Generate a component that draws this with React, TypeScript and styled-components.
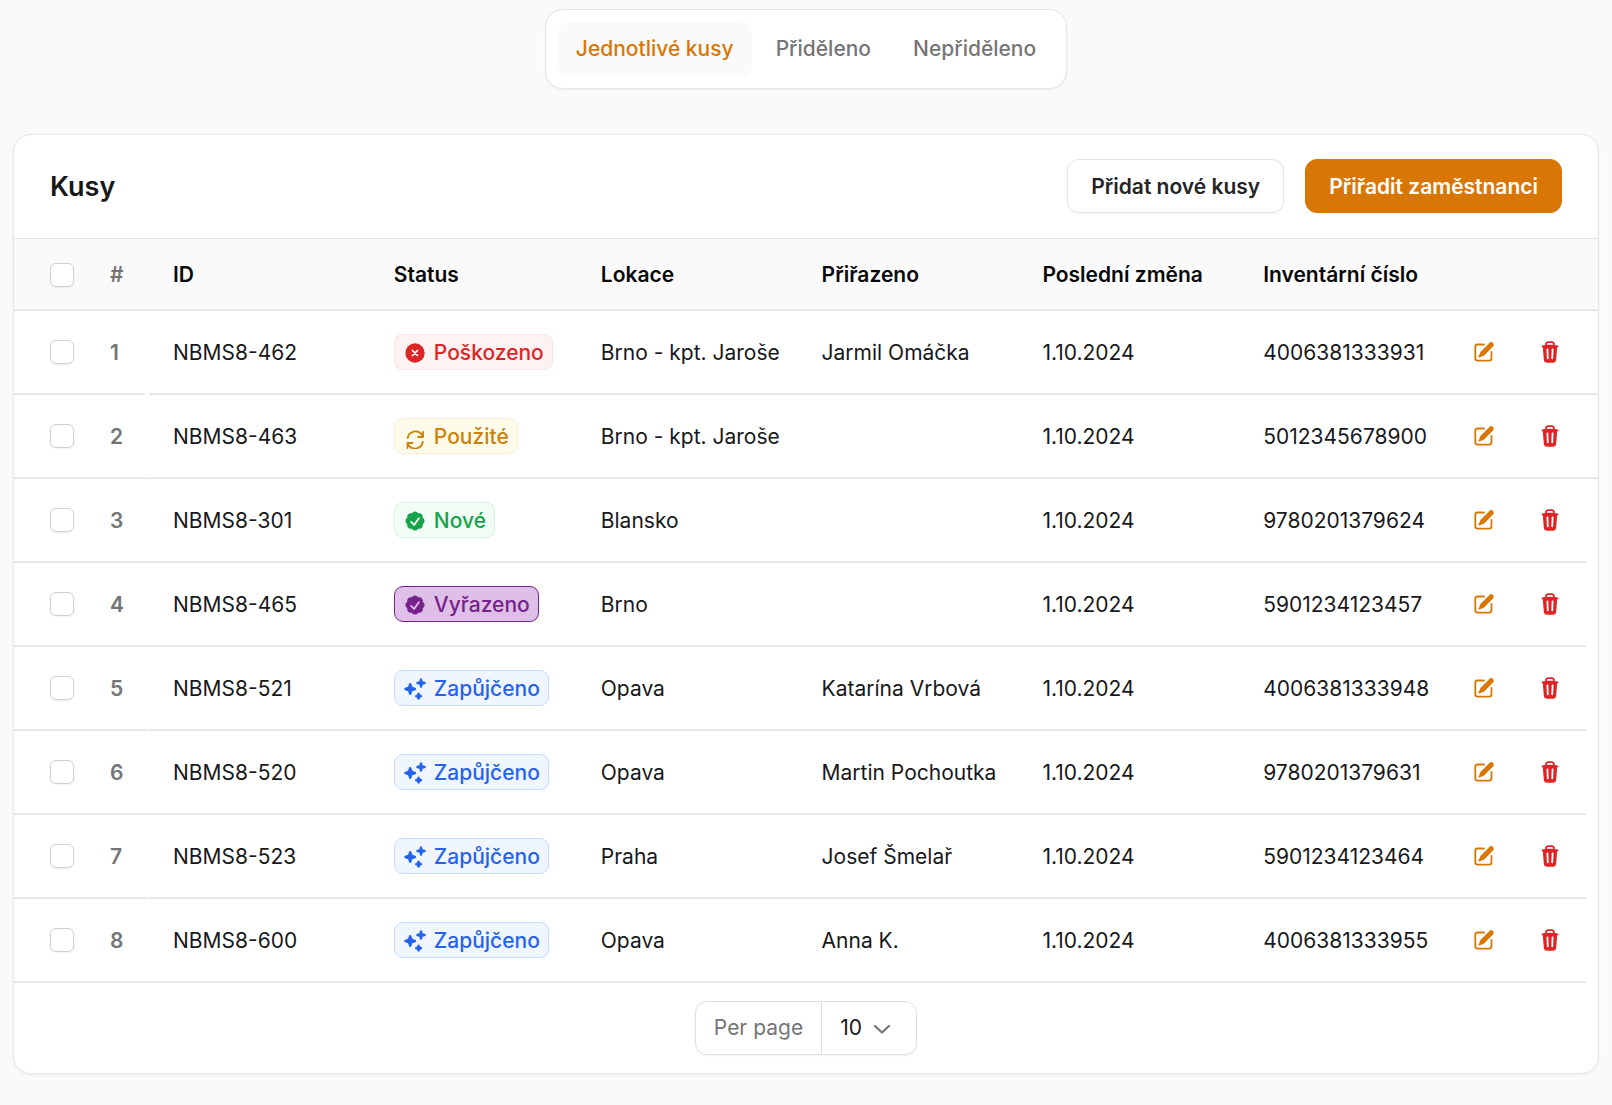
import React, { useState } from "react";
import styled, { createGlobalStyle, css } from "styled-components";
import { HiMiniCheckBadge, HiMiniPencilSquare, HiMiniSparkles, HiMiniTrash } from "react-icons/hi2";

const GlobalStyle = createGlobalStyle`
  *, *::before, *::after { box-sizing: border-box; }
  body {
    margin: 0;
    background: #fafafa;
    color: #18181b;
    font-family: Inter, "Liberation Sans", sans-serif;
    font-size: 21px;
    line-height: 30px;
  }
  button, input, select { font: inherit; color: inherit; }
`;

const ring = css`
  border: 1px solid #e6e6e6;
  box-shadow: 0 1px 3px rgba(0, 0, 0, 0.06);
`;

const Page = styled.main`
  display: flex;
  flex-direction: column;
  gap: 45px;
  padding: 9px 13px 31px;
`;

const Tabs = styled.nav`
  ${ring}
  align-self: center;
  display: flex;
  gap: 6px;
  padding: 12px;
  border-radius: 18px;
  background: #fff;
`;

const Tab = styled.button<{ $active: boolean }>`
  border: 0;
  border-radius: 12px;
  padding: 12px 18px;
  background: ${(p) => (p.$active ? "#fafafa" : "transparent")};
  color: ${(p) => (p.$active ? "#d97706" : "#757575")};
  font-weight: 500;
  cursor: pointer;
`;

const Card = styled.section`
  ${ring}
  border-radius: 18px;
  background: #fff;
  overflow: hidden;
`;

const CardHeader = styled.header`
  display: flex;
  align-items: center;
  justify-content: space-between;
  padding: 24px 36px 25px;
  border-bottom: 1px solid #e2e2e2;
`;

const Title = styled.h1`
  margin: 0;
  padding-top: 2px;
  font-size: 27px;
  line-height: 36px;
  font-weight: 600;
`;

const Actions = styled.div`
  display: flex;
  gap: 21px;
`;

const Button = styled.button<{ $primary?: boolean }>`
  padding: 12px 23px 10px;
  border: 1px solid ${(p) => (p.$primary ? "#d97706" : "#e4e4e4")};
  border-radius: 12px;
  background: ${(p) => (p.$primary ? "#d97706" : "#fff")};
  color: ${(p) => (p.$primary ? "#fff" : "#242427")};
  box-shadow: 0 1px 2px rgba(0, 0, 0, 0.06);
  font-weight: 600;
  cursor: pointer;
`;

const Table = styled.table`
  width: 100%;
  table-layout: fixed;
  border-collapse: separate;
  border-spacing: 0;
`;

const Col = styled.col<{ $width?: number }>`
  ${(p) => p.$width && `width: ${p.$width}px;`}
`;

/* Row separator along the bottom of a cell, stopping $gap pixels before its right edge. */
const rule = css<{ $gap?: number }>`
  background-image: linear-gradient(#efefef 50%, #e0e0e0 50%);
  background-repeat: no-repeat;
  background-position: left bottom;
  background-size: calc(100% - ${(p) => p.$gap ?? 0}px) 2px;
`;

const HeadCell = styled.th<{ $muted?: boolean; $gap?: number }>`
  height: 72px;
  padding: 0 0 0 ${(p) => (p.$muted ? 12 : 24)}px;
  background-color: #fafafa;
  ${rule}
  color: ${(p) => (p.$muted ? "#757575" : "#09090b")};
  font-weight: 600;
  text-align: left;
  white-space: nowrap;
`;

const Cell = styled.td<{ $muted?: boolean; $gap?: number }>`
  height: 84px;
  padding: 0 0 0 ${(p) => (p.$muted ? 12 : 24)}px;
  ${rule}
  color: ${(p) => (p.$muted ? "#757575" : "#18181b")};
  font-weight: ${(p) => (p.$muted ? 600 : 400)};
  white-space: nowrap;
`;

const CheckHeadCell = styled(HeadCell)`
  padding-left: 36px;
`;

const CheckCell = styled(Cell)`
  padding: 0 0 2px 36px;
`;

const StatusCell = styled(Cell)`
  padding-bottom: 2px;
`;

const IconCell = styled(Cell)`
  padding: 0 0 2px 12px;
`;

const Checkbox = styled.input`
  appearance: none;
  display: block;
  width: 24px;
  height: 24px;
  margin: 0;
  border: 1px solid #d0d0d0;
  border-radius: 6px;
  background: #fff;
  box-shadow: 0 1px 2px rgba(0, 0, 0, 0.06);
  &:checked { background: #d97706; border-color: #d97706; }
`;

type Tone = "danger" | "warning" | "success" | "retired" | "info";

const tones: Record<Tone, { fg: string; bg: string; line: string }> = {
  danger: { fg: "#dc2626", bg: "#fef2f2", line: "#fde2e2" },
  warning: { fg: "#ca8209", bg: "#fffbeb", line: "#fdeed3" },
  success: { fg: "#16a34a", bg: "#f1fdf5", line: "#d6f3e0" },
  retired: { fg: "#77218b", bg: "#debfe8", line: "#77218b" },
  info: { fg: "#2563eb", bg: "#eff6ff", line: "#c3dcfd" },
};

const Badge = styled.span<{ $tone: Tone }>`
  display: flex;
  align-items: center;
  gap: 7px;
  width: fit-content;
  height: 36px;
  padding: 1px 8px 0;
  border: 1px solid ${(p) => tones[p.$tone].line};
  border-radius: 9px;
  background: ${(p) => tones[p.$tone].bg};
  color: ${(p) => tones[p.$tone].fg};
  font-weight: 500;
  svg { width: 24px; height: 24px; flex: none; }
`;

const IconButton = styled.button<{ $color: string }>`
  display: block;
  padding: 0;
  border: 0;
  background: none;
  color: ${(p) => p.$color};
  cursor: pointer;
  svg { display: block; width: 24px; height: 24px; }
`;

const Footer = styled.footer`
  display: flex;
  justify-content: center;
  padding: 18px 36px;
`;

const PerPage = styled.div`
  display: flex;
  border: 1px solid #e0e0e0;
  border-radius: 12px;
  box-shadow: 0 1px 2px rgba(0, 0, 0, 0.05);
  background: #fff;
`;

const PerPageLabel = styled.label`
  padding: 11px 18px;
  border-right: 1px solid #e0e0e0;
  color: #757575;
`;

const SelectWrap = styled.div`
  display: grid;
  grid-template-columns: 1fr;
  align-items: center;
  width: 94px;
  > * { grid-area: 1 / 1; }
  svg { justify-self: end; margin-right: 20px; width: 28px; height: 28px; pointer-events: none; }
`;

const Select = styled.select`
  appearance: none;
  width: 100%;
  height: 52px;
  padding: 0 0 0 18px;
  border: 0;
  background: transparent;
`;

const ErrorIcon = () => (
  <svg viewBox="0 0 24 24" aria-hidden="true">
    <circle cx="12" cy="12" r="9.7" fill="currentColor" />
    <path d="m9.500 9.500 5 5m0-5-5 5" fill="none" stroke="#fff" strokeWidth="1.700" strokeLinecap="round" />
  </svg>
);

const RefreshIcon = () => (
  <svg viewBox="0 0 24 24" fill="none" stroke="currentColor" strokeWidth="1.8" strokeLinecap="round" strokeLinejoin="round" aria-hidden="true">
    <path d="M20 7v5h-5M4.500 23v-5h5M4.700 13a7.900 7.900 0 0 1 14.200-3.200L20 12M19.800 17a7.900 7.900 0 0 1-14.200 3.200L4.500 18" />
  </svg>
);

const ChevronIcon = () => (
  <svg viewBox="0 0 28 28" fill="none" stroke="#757575" strokeWidth="2.200" strokeLinecap="round" strokeLinejoin="round" aria-hidden="true">
    <path d="m7 12 7 6.500L21 12" />
  </svg>
);

const toneIcon: Record<Tone, React.ReactNode> = {
  danger: <ErrorIcon />,
  warning: <RefreshIcon />,
  success: <HiMiniCheckBadge />,
  retired: <HiMiniCheckBadge />,
  info: <HiMiniSparkles />,
};

interface Item {
  id: string;
  tone: Tone;
  status: string;
  place: string;
  person: string;
  code: string;
  numberGap?: number;
  endGap?: number;
}

const items: Item[] = [
  { id: "NBMS8-462", tone: "danger", status: "Poškozeno", place: "Brno - kpt. Jaroše", person: "Jarmil Omáčka", code: "4006381333931", numberGap: 4 },
  { id: "NBMS8-463", tone: "warning", status: "Použité", place: "Brno - kpt. Jaroše", person: "", code: "5012345678900", numberGap: 1 },
  { id: "NBMS8-301", tone: "success", status: "Nové", place: "Blansko", person: "", code: "9780201379624", endGap: 12 },
  { id: "NBMS8-465", tone: "retired", status: "Vyřazeno", place: "Brno", person: "", code: "5901234123457", endGap: 12 },
  { id: "NBMS8-521", tone: "info", status: "Zapůjčeno", place: "Opava", person: "Katarína Vrbová", code: "4006381333948", numberGap: 1, endGap: 12 },
  { id: "NBMS8-520", tone: "info", status: "Zapůjčeno", place: "Opava", person: "Martin Pochoutka", code: "9780201379631", endGap: 12 },
  { id: "NBMS8-523", tone: "info", status: "Zapůjčeno", place: "Praha", person: "Josef Šmelař", code: "5901234123464", numberGap: 1, endGap: 12 },
  { id: "NBMS8-600", tone: "info", status: "Zapůjčeno", place: "Opava", person: "Anna K.", code: "4006381333955", endGap: 12 },
];

const tabs = ["Jednotlivé kusy", "Přiděleno", "Nepřiděleno"];
const headings = ["ID", "Status", "Lokace", "Přiřazeno", "Poslední změna", "Inventární číslo"];

export default function App() {
  const [tab, setTab] = useState(0);
  const [picked, setPicked] = useState<string[]>([]);
  const toggle = (id: string) =>
    setPicked((now) => (now.includes(id) ? now.filter((x) => x !== id) : [...now, id]));

  return (
    <>
      <GlobalStyle />
      <Page>
        <Tabs>
          {tabs.map((label, i) => (
            <Tab key={label} type="button" $active={i === tab} onClick={() => setTab(i)}>
              {label}
            </Tab>
          ))}
        </Tabs>
        <Card>
          <CardHeader>
            <Title>Kusy</Title>
            <Actions>
              <Button type="button">Přidat nové kusy</Button>
              <Button type="button" $primary>Přiřadit zaměstnanci</Button>
            </Actions>
          </CardHeader>
          <Table>
            <colgroup>
              <Col $width={84} />
              <Col $width={51} />
              <Col />
              <Col $width={207} />
              <Col />
              <Col />
              <Col />
              <Col />
              <Col $width={66} />
              <Col $width={72} />
            </colgroup>
            <thead>
              <tr>
                <CheckHeadCell>
                  <Checkbox
                    type="checkbox"
                    aria-label="Vybrat vše"
                    checked={picked.length === items.length}
                    onChange={(e) => setPicked(e.target.checked ? items.map((x) => x.id) : [])}
                  />
                </CheckHeadCell>
                <HeadCell $muted>#</HeadCell>
                {headings.map((h) => (
                  <HeadCell key={h}>{h}</HeadCell>
                ))}
                <HeadCell aria-label="Upravit" />
                <HeadCell aria-label="Smazat" />
              </tr>
            </thead>
            <tbody>
              {items.map((item, i) => (
                <tr key={item.id}>
                  <CheckCell>
                    <Checkbox
                      type="checkbox"
                      aria-label={item.id}
                      checked={picked.includes(item.id)}
                      onChange={() => toggle(item.id)}
                    />
                  </CheckCell>
                  <Cell $muted $gap={item.numberGap}>{i + 1}</Cell>
                  <Cell>{item.id}</Cell>
                  <StatusCell>
                    <Badge $tone={item.tone}>
                      {toneIcon[item.tone]}
                      {item.status}
                    </Badge>
                  </StatusCell>
                  <Cell>{item.place}</Cell>
                  <Cell>{item.person}</Cell>
                  <Cell>1.10.2024</Cell>
                  <Cell>{item.code}</Cell>
                  <IconCell>
                    <IconButton type="button" $color="#d97706" aria-label="Upravit">
                      <HiMiniPencilSquare />
                    </IconButton>
                  </IconCell>
                  <IconCell $gap={item.endGap}>
                    <IconButton type="button" $color="#dc2626" aria-label="Smazat">
                      <HiMiniTrash />
                    </IconButton>
                  </IconCell>
                </tr>
              ))}
            </tbody>
          </Table>
          <Footer>
            <PerPage>
              <PerPageLabel htmlFor="per-page">Per page</PerPageLabel>
              <SelectWrap>
                <Select id="per-page" defaultValue="10">
                  <option>10</option>
                  <option>25</option>
                  <option>50</option>
                </Select>
                <ChevronIcon />
              </SelectWrap>
            </PerPage>
          </Footer>
        </Card>
      </Page>
    </>
  );
}
